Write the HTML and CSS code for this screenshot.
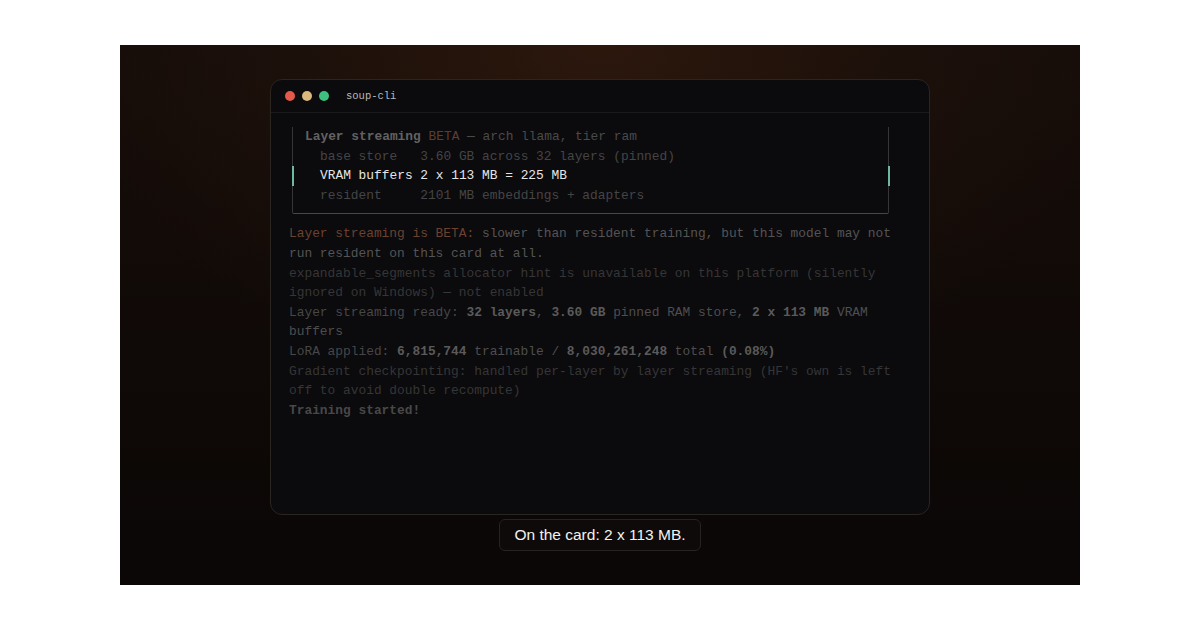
FILE: index.html
```html
<!DOCTYPE html>
<html>
<head>
<meta charset="utf-8">
<link rel="stylesheet" href="styles.css">
</head>
<body>
<div class="stage">
  <div class="window">
    <div class="titlebar">
      <span class="dot red"></span>
      <span class="dot yellow"></span>
      <span class="dot green"></span>
      <span class="title">soup-cli</span>
    </div>
    <div class="term">
      <div class="panel">
        <div class="row head"><b class="h">Layer streaming</b> <span class="beta">BETA</span> — arch llama, tier ram</div>
        <div class="row sub">base store   3.60 GB across 32 layers (pinned)</div>
        <div class="row sub active">VRAM buffers 2 x 113 MB = 225 MB</div>
        <div class="row sub">resident     2101 MB embeddings + adapters</div>
      </div>
      <div class="log">
        <p class="l warn"><span class="warnhead">Layer streaming is BETA:</span> slower than resident training, but this model may not run resident on this card at all.</p>
        <p class="l faint">expandable_segments allocator hint is unavailable on this platform (silently ignored on Windows) — not enabled</p>
        <p class="l mid">Layer streaming ready: <b>32 layers</b><span class="hi">, </span><b>3.60 GB</b><span class="hi"> pinned RAM store, </span><b>2 x 113 MB</b><span class="hi"> VRAM buffers</span></p>
        <p class="l mid">LoRA applied: <b>6,815,744</b><span class="hi"> trainable / </span><b>8,030,261,248</b><span class="hi"> total </span><b>(0.08%)</b></p>
        <p class="l faint">Gradient checkpointing: handled per-layer by layer streaming (HF's own is left off to avoid double recompute)</p>
        <p class="l done"><b>Training started!</b></p>
      </div>
    </div>
  </div>
  <div class="caption">On the card: 2 x 113 MB.</div>
</div>
</body>
</html>
```
FILE: styles.css
```css
html, body {
  margin: 0;
  padding: 0;
  background: #ffffff;
}
body {
  width: 1200px;
  height: 630px;
  padding-top: 45px;
  box-sizing: border-box;
}
.stage {
  margin-left: 120px;
  width: 960px;
  height: 540px;
  box-sizing: border-box;
  padding-top: 34px;
  display: flex;
  flex-direction: column;
  align-items: center;
  background:
    radial-gradient(ellipse 70% 80% at 50% 0%, rgba(48, 25, 13, 0.85) 0%, rgba(32, 18, 11, 0.6) 45%, rgba(0,0,0,0) 80%),
    linear-gradient(180deg, #160d09 0%, #0f0907 60%, #0a0706 100%);
}
.window {
  width: 660px;
  height: 436px;
  flex-shrink: 0;
  box-sizing: border-box;
  border: 1px solid #2b2522;
  border-radius: 12px;
  background: #0b0a0d;
  overflow: hidden;
  display: flex;
  flex-direction: column;
}
.titlebar {
  height: 33px;
  flex-shrink: 0;
  box-sizing: border-box;
  border-bottom: 1px solid #1c1a1d;
  display: flex;
  align-items: center;
  padding-left: 14px;
  gap: 7px;
}
.dot {
  width: 10px;
  height: 10px;
  border-radius: 50%;
  display: block;
}
.red { background: #e2594b; }
.yellow { background: #dbb97c; }
.green { background: #3ec07f; }
.title {
  margin-left: 10px;
  font-family: "Liberation Mono", "DejaVu Sans Mono", monospace;
  font-size: 10.5px;
  color: #b9b9b9;
}
.term {
  padding: 14px 0 0 18px;
  font-family: "Liberation Mono", "DejaVu Sans Mono", monospace;
  font-size: 12.87px;
  line-height: 19.6px;
}
.panel {
  margin-left: 3px;
  width: 597px;
  box-sizing: border-box;
  border-left: 1px solid #363636;
  border-right: 1px solid #363636;
  border-bottom: 1px solid #34504a;
  border-bottom-right-radius: 2px;
  border-bottom-left-radius: 2px;
  padding: 0 0 8px 12px;
}
.row { color: #454545; white-space: pre; }
.row.head { color: #4a4a4a; }
.row .h { color: #626262; }
.row .beta { color: #5a3f33; }
.row.sub { padding-left: 15px; }
.row.active { color: #e6e6e6; position: relative; }
.row.active::before,
.row.active::after {
  content: "";
  position: absolute;
  top: 0;
  bottom: 0;
  width: 2px;
  background: #6fb8a0;
}
.row.active::before { left: -13px; }
.row.active::after { right: -2px; }
.log {
  margin-top: 10px;
  width: 80ch;
}
.l { margin: 0; }
.warn { color: #545454; }
.warnhead { color: #6b4230; }
.faint { color: #363636; }
.mid { color: #474747; }
.mid b { color: #5a5a5a; }
.mid .hi { color: #4e4e4e; }
.done b { color: #484848; }
.caption {
  margin-top: 4px;
  height: 32px;
  flex-shrink: 0;
  box-sizing: border-box;
  padding: 0 14px;
  display: flex;
  align-items: center;
  border: 1px solid #272322;
  border-radius: 6px;
  background: #0d0a09;
  color: #f2f2f2;
  font-family: "Liberation Sans", Arial, sans-serif;
  font-size: 15.5px;
}
```
